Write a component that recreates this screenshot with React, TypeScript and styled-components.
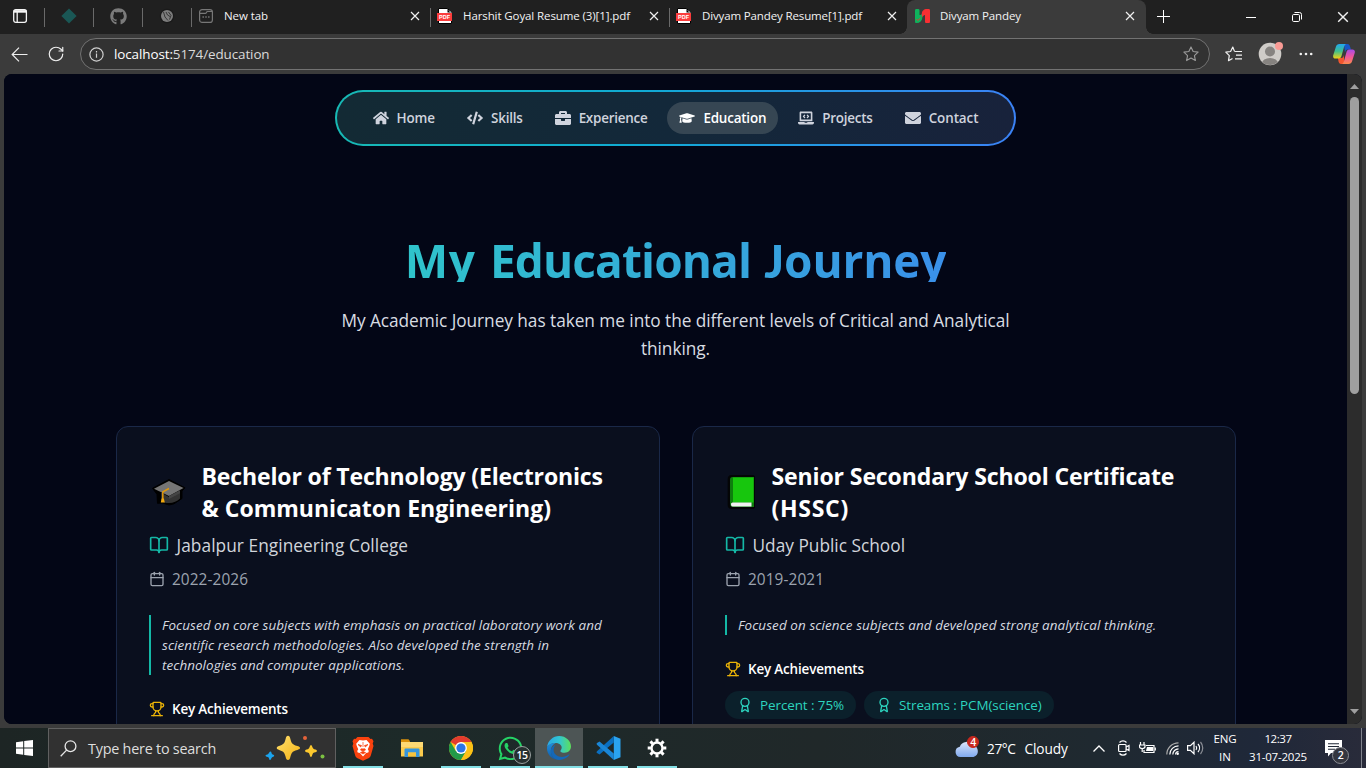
import React from "react";
import styled, { createGlobalStyle, css } from "styled-components";
import { Award, BookOpen, Calendar, Trophy, RotateCw } from "lucide-react";
import {
  FaHome,
  FaCode,
  FaBriefcase,
  FaGraduationCap,
  FaLaptopCode,
  FaEnvelope,
  FaGithub,
  FaWhatsapp,
} from "react-icons/fa";

const Global = createGlobalStyle`
  * { box-sizing: border-box; }
  body {
    margin: 0;
    overflow: hidden;
    font-family: "Open Sans", "Noto Sans", sans-serif;
    background: #3b3b3b;
  }
  svg { display: block; flex: none; }
`;

const Text = styled.span<{ $ls?: number }>`
  white-space: nowrap;
  letter-spacing: ${(p) => p.$ls ?? 0}px;
`;

/* ---------- Window ---------- */

const Window = styled.div`
  width: 1366px;
  height: 768px;
  display: flex;
  flex-direction: column;
  background: #3b3b3b;
  overflow: hidden;
`;

/* ---------- Tab strip ---------- */

const TabStrip = styled.div`
  height: 34px;
  flex: none;
  display: flex;
  align-items: stretch;
  background: #202020;
  color: #f2f2f2;
`;

const Pinned = styled.div<{ $w?: number }>`
  width: ${(p) => p.$w ?? 48}px;
  height: 32px;
  display: flex;
  align-items: center;
  justify-content: center;
`;

const Separator = styled.div`
  width: 1px;
  height: 19px;
  margin-top: 8px;
  background: #6a6a6a;
`;

const Tab = styled.div<{ $w: number; $active?: boolean }>`
  width: ${(p) => p.$w}px;
  height: 34px;
  padding: 0 10px 2px 6px;
  display: flex;
  align-items: center;
  font-size: 11.52px;
  ${(p) =>
    p.$active &&
    css`
      position: relative;
      padding: 0 11px 2px 7px;
      background: #3b3b3b;
      border-radius: 8px 8px 0 0;
      &::before,
      &::after {
        content: "";
        position: absolute;
        bottom: 0;
        width: 7px;
        height: 7px;
      }
      &::before {
        left: -7px;
        background: radial-gradient(circle at 0 0, #202020 6.5px, #3b3b3b 7px);
      }
      &::after {
        right: -7px;
        background: radial-gradient(circle at 100% 0, #202020 6.5px, #3b3b3b 7px);
      }
    `}
`;

const TabIcon = styled.div`
  width: 16px;
  margin-right: 10px;
  display: flex;
  justify-content: center;
`;

const TabTitle = styled(Text)`
  flex: 1;
  padding-bottom: 2px;
`;

const NewTab = styled.div`
  padding: 0 0 2px 11px;
  flex: 1;
  display: flex;
  align-items: center;
`;

const WindowButton = styled.div`
  width: 46px;
  display: flex;
  align-items: center;
  justify-content: center;
`;

const Cross = ({ size = 10 }: { size?: number }) => (
  <svg width={size} height={size} viewBox="0 0 10 10" stroke="#f0f0f0" strokeWidth="1.2">
    <path d="M1 1 9 9M9 1 1 9" />
  </svg>
);

const PdfGlyph = styled.div`
  width: 16px;
  height: 16px;
  position: relative;
`;

const PdfLabel = styled.span`
  position: absolute;
  left: 0;
  top: 5px;
  width: 15px;
  height: 8px;
  background: #fb3c3c;
  color: #fff;
  font: 700 5.5px/8px "Liberation Sans", sans-serif;
  text-align: center;
`;

const PdfIcon = () => (
  <PdfGlyph>
    <svg width="16" height="16" viewBox="0 0 16 16">
      <path d="M1.5.5h9l4 4v11h-13z" fill="#fff" stroke="#000" />
      <path d="M10.5.5v4h4z" fill="#000" />
      <path d="M12 2.5l2 2" stroke="#fff" />
    </svg>
    <PdfLabel>PDF</PdfLabel>
  </PdfGlyph>
);

/* ---------- Toolbar ---------- */

const Toolbar = styled.div`
  height: 40px;
  flex: none;
  display: flex;
  align-items: center;
  padding-left: 10px;
`;

const ToolIcon = styled.div<{ $w: number; $ml?: number }>`
  width: ${(p) => p.$w}px;
  margin-left: ${(p) => p.$ml ?? 0}px;
  display: flex;
  justify-content: center;
`;

const AddressBar = styled.div`
  width: 1130px;
  height: 32px;
  margin-left: 15px;
  padding: 0 10px 0 8px;
  display: flex;
  align-items: center;
  background: #323232;
  border: 1px solid #727272;
  border-radius: 16px;
`;

const Url = styled.div`
  flex: 1;
  margin-left: 10px;
  font-size: 13.44px;
  color: #fff;
`;

const UrlPath = styled(Text)`
  color: #dadada;
`;

const star =
  "M8 .9l2.15 4.6 4.95.65-3.65 3.45.95 4.95L8 12.1l-4.4 2.45.95-4.95L.9 6.15l4.95-.65z";

/* ---------- Page ---------- */

const Viewport = styled.div`
  height: 650px;
  flex: none;
  margin: 0 4px;
  display: flex;
  border-radius: 8px;
  overflow: hidden;
  background: #020617;
`;

const Page = styled.main`
  width: 1343px;
  height: 650px;
  padding-top: 16px;
  overflow: hidden;
  display: flex;
  flex-direction: column;
  align-items: center;
  background: #030616;
`;

const NavBar = styled.nav`
  height: 56px;
  flex: none;
  padding: 0 24px;
  display: flex;
  align-items: center;
  gap: 8px;
  border: 2px solid transparent;
  border-radius: 28px;
  background:
    linear-gradient(90deg, #132a34, #13283a 50%, #18223b) padding-box,
    linear-gradient(90deg, #17b9b4, #10aad4 45%, #3b82f6) border-box;
`;

const NavItem = styled.a<{ $active?: boolean }>`
  height: 32px;
  padding: 0 12px;
  display: flex;
  align-items: center;
  gap: 8px;
  border-radius: 16px;
  font-size: 13.44px;
  font-weight: 650;
  color: ${(p) => (p.$active ? "#ffffff" : "#cfd3dd")};
  background: ${(p) => (p.$active ? "#364653" : "transparent")};
`;

const Title = styled.h1`
  margin: 88px 0 24px;
  height: 48px;
  flex: none;
  font-size: 46px;
  line-height: 52px;
  font-weight: 700;
  white-space: nowrap;
  color: transparent;
  background: linear-gradient(90deg, #2fc4cb, #35a6db 60%, #3a90ea);
  background-clip: text;
  -webkit-background-clip: text;
`;

const TitleWord = styled(Text)`
  margin-left: 2px;
`;

/* Capital that rests on the baseline, so the clipped line box does not cut it. */
const Initial = styled.span`
  font-family: Lato, sans-serif;
  font-weight: 900;
  font-size: 46px;
  margin-left: 2px;
`;

const Lead = styled.p`
  margin: 1px 0 63px;
  flex: none;
  width: 680px;
  text-align: center;
  font-size: 17.28px;
  line-height: 28px;
  letter-spacing: -0.05px;
  color: #d8dce2;
`;

const Cards = styled.section`
  display: grid;
  grid-template-columns: 544px 544px;
  gap: 32px;
  flex: none;
  margin-left: 1px;
`;

const Card = styled.article`
  height: 420px;
  padding: 32px;
  border: 1px solid #1a2848;
  border-radius: 12px;
  background: #0a0f1e;
`;

const CardHead = styled.div`
  height: 64px;
  display: flex;
  align-items: center;
`;

const Emblem = styled.div<{ $w: number }>`
  width: ${(p) => p.$w}px;
  margin: 2px 16.5px 0 0;
  flex: none;
`;

const CardTitle = styled.h2`
  margin: 2px 0 0;
  font-size: 23.04px;
  line-height: 32px;
  font-weight: 700;
  color: #fff;
  display: flex;
  flex-direction: column;
`;

const School = styled.div`
  margin-top: 8px;
  height: 28px;
  display: flex;
  align-items: center;
  gap: 7.5px;
  font-size: 17.28px;
  color: #d1d5db;
  svg { color: #14b8a6; }
`;

const Period = styled.div`
  margin-top: 8px;
  height: 24px;
  display: flex;
  align-items: center;
  gap: 7px;
  font-size: 15.36px;
  color: #9ca3af;
`;

const Summary = styled.p`
  margin: 24px 0;
  padding-left: 11px;
  border-left: 2px solid #14b8a6;
  display: flex;
  flex-direction: column;
  font-size: 13.44px;
  line-height: 20px;
  font-style: italic;
  color: #d6dae0;
`;

const Achievements = styled.h3`
  margin: 0 0 12px;
  height: 20px;
  display: flex;
  align-items: center;
  gap: 7px;
  font-size: 13.44px;
  font-weight: 650;
  color: #fff;
  svg { color: #eab308; }
`;

const Chips = styled.div`
  display: flex;
  gap: 8px;
`;

const Chip = styled.span<{ $w: number }>`
  width: ${(p) => p.$w}px;
  height: 28px;
  padding: 0 12px;
  display: flex;
  align-items: center;
  gap: 7px;
  border-radius: 14px;
  background: #0b202b;
  font-size: 13.44px;
  color: #2dd4bf;
`;

const ScrollTrack = styled.div`
  width: 15px;
  height: 650px;
  padding: 10px 3px;
  display: flex;
  flex-direction: column;
  background: #2c2c2c;
`;

const ScrollThumb = styled.div`
  height: 297px;
  margin-top: 8px;
  margin-bottom: auto;
  border-radius: 5px;
  background: #9f9f9f;
`;

const CapEmoji = () => (
  <svg width="37" height="34" viewBox="0 0 37 34">
    <path
      d="M20 4.5 36 12.8 33 16v7.5L25 28.8 20 30l-6.5-2-5 .3-.5-9-4.5-6z"
      fill="#000"
      stroke="#000"
      strokeLinejoin="round"
    />
    <path d="M12 17.5 20 22l11-5v6.4c-3 2.8-6.5 4.6-11 4.6-3.5 0-6-1-8-2.6z" fill="#333" />
    <path d="M20 6 34.5 13 20 21 5 13.8z" fill="#757575" />
    <path d="m20 21 11-5.7v3L20 24z" fill="#454545" />
    <path d="m20 13.5-6.2 3.4V26" fill="none" stroke="#e39a0b" strokeWidth="1.5" />
    <path d="M12.6 23.5h2.2l1 4h-4z" fill="#f2a90f" />
  </svg>
);

const BookEmoji = () => (
  <svg width="30" height="36" viewBox="0 0 30 36">
    <rect x="2.7" y="1" width="28" height="34" rx="4" fill="#040506" />
    <path d="M7.5 3H29v30H8.5A3.5 3.5 0 0 1 5 29.5v-24A2.5 2.5 0 0 1 7.5 3z" fill="#0e7d0e" />
    <path d="M8 3.5h20.5v25H8z" fill="#17c60d" />
    <path d="M7.5 28.5h19v4h-18a2 2 0 0 1-1-4z" fill="#f1f1f1" />
  </svg>
);

type Edu = {
  emblem: React.ReactNode;
  emblemWidth: number;
  title: [string, number][];
  school: [string, number];
  period: string;
  summary: [string, number][];
  chips: [string, number, number][];
};

const education: Edu[] = [
  {
    emblem: <CapEmoji />,
    emblemWidth: 36,
    title: [
      ["Bechelor of Technology (Electronics", -0.15],
      ["& Communicaton Engineering)", -0.01],
    ],
    school: ["Jabalpur Engineering College", 0.06],
    period: "2022-2026",
    summary: [
      ["Focused on core subjects with emphasis on practical laboratory work and", 0.066],
      ["scientific research methodologies. Also developed the strength in", 0.086],
      ["technologies and computer applications.", 0.055],
    ],
    chips: [],
  },
  {
    emblem: <BookEmoji />,
    emblemWidth: 30,
    title: [
      ["Senior Secondary School Certificate", -0.12],
      ["(HSSC)", 0.7],
    ],
    school: ["Uday Public School", 0.01],
    period: "2019-2021",
    summary: [["Focused on science subjects and developed strong analytical thinking.", 0.095]],
    chips: [
      ["Percent : 75%", -0.08, 131],
      ["Streams : PCM(science)", -0.09, 190],
    ],
  },
];

/* ---------- Taskbar ---------- */

const Taskbar = styled.footer`
  height: 40px;
  margin-top: 4px;
  flex: none;
  display: flex;
  background: linear-gradient(90deg, #1d2524, #1d2a29 30%, #202829 60%, #1f2930 80%, #1f2839 92%, #292b3a);
  color: #fff;
`;

const StartButton = styled.div`
  width: 48px;
  display: flex;
  align-items: center;
  justify-content: center;
`;

const SearchBox = styled.div`
  width: 288px;
  padding: 0 9px 0 11px;
  display: flex;
  align-items: center;
  background: #313131;
  border: 1px solid #606060;
  font-size: 14.4px;
  color: #dedede;
`;

const SearchText = styled(Text)`
  margin-left: 11px;
  flex: 1;
`;

const Apps = styled.div`
  margin-left: 3px;
  display: flex;
  gap: 1px;
  flex: 1;
`;

const AppSlot = styled.div<{ $state?: "open" | "active" }>`
  width: 48px;
  height: 40px;
  position: relative;
  display: flex;
  align-items: center;
  justify-content: center;
  background: ${(p) => (p.$state === "active" ? "#4d5555" : "transparent")};
  &::after {
    content: "";
    position: absolute;
    bottom: 0;
    left: ${(p) => (p.$state === "active" ? 0 : 4)}px;
    right: ${(p) => (p.$state === "active" ? 0 : 4)}px;
    height: 2px;
    background: ${(p) => (p.$state ? "#83dfe5" : "transparent")};
  }
`;

const CountBadge = styled.span<{ $x: number; $y: number; $d: number; $bg: string; $ring: string }>`
  position: absolute;
  left: ${(p) => p.$x}px;
  top: ${(p) => p.$y}px;
  width: ${(p) => p.$d}px;
  height: ${(p) => p.$d}px;
  line-height: ${(p) => p.$d - 2}px;
  border: 1px solid ${(p) => p.$ring};
  border-radius: 50%;
  background: ${(p) => p.$bg};
  color: #fff;
  font-size: 10.5px;
  font-weight: 600;
  letter-spacing: -0.4px;
  text-align: center;
`;

const Tray = styled.div`
  display: flex;
  align-items: center;
`;

const TrayItem = styled.div<{ $w: number }>`
  width: ${(p) => p.$w}px;
  height: 40px;
  flex: none;
  position: relative;
  display: flex;
  align-items: center;
`;

const Weather = styled.div`
  width: 106px;
  display: flex;
  gap: 9px;
  font-size: 13.7px;
`;

const Stack = styled.div<{ $w: number }>`
  width: ${(p) => p.$w}px;
  margin-top: -1px;
  display: flex;
  flex-direction: column;
  align-items: center;
  font-size: 11.52px;
  line-height: 17.5px;
`;

const Desktop = styled.div`
  width: 5px;
  height: 40px;
  border-left: 1px solid #80838c;
`;

const Brave = () => (
  <svg width="22" height="25" viewBox="0 0 22 25">
    <path d="M5.5 1h11l2 2 1.5-.3 1.5 2.600-.8 2.200.8 2.500-2.700 9.500c-.5 1.500-1.300 2-2.300 2.700L11 24.800l-5.500-2.600c-1-.7-1.800-1.200-2.300-2.700L.5 10l.8-2.500-.8-2.200L2 2.700 3.500 3z" fill="#f9420e" />
    <path d="M11 4.500 14.500 4l3.300 3.800-.5 2-1.500 3.500 1 1.700-.5 1.500-2.300.5L11 20.500 8 17l-2.300-.5-.5-1.500 1-1.700-1.500-3.500-.5-2L7.500 4z" fill="#fff" />
    <path d="m6 8.500 3.500 1-.8 1.500zM16 8.500l-3.500 1 .8 1.500zM9.300 12.500 8.500 14l2.500 1 2.500-1-.8-1.500M8.500 16.500l2.500-1 2.500 1L11 18zM11 6v5" fill="#f9420e" stroke="#f9420e" strokeWidth=".7" />
  </svg>
);

const Explorer = () => (
  <svg width="22" height="20" viewBox="0 0 22 20">
    <path d="M0 1.200h7.500l1.500 2V7H0z" fill="#d9910c" />
    <path d="M0 4h22v14.500H0z" fill="#fbcb4d" />
    <path d="M0 4h22v5H0z" fill="#fdd974" />
    <path d="M3.500 11.500a1 1 0 0 1 1-1h13a1 1 0 0 1 1 1v7.500H15v-4.500H7V19H3.500z" fill="#3595dc" />
    <path d="M7 14.500h8V18.500H7z" fill="#f5c33e" />
  </svg>
);

const Chrome = () => (
  <svg width="24" height="24" viewBox="0 0 24 24">
    <circle cx="12" cy="12" r="12" fill="#fbc116" />
    <path d="M12 12 1.600 6A12 12 0 0 1 22.400 6H12z" fill="#e33b2e" />
    <path d="M1.600 6A12 12 0 0 0 12 24l5.200-9L12 12 6.800 15z" fill="#229a48" />
    <path d="M12 6h10.400A12 12 0 0 1 12 24l5.200-9z" fill="#fbc116" />
    <circle cx="12" cy="12" r="5.900" fill="#fff" />
    <circle cx="12" cy="12" r="4.600" fill="#2d75e6" />
  </svg>
);

const EdgeLogo = () => (
  <svg width="24" height="24" viewBox="0 0 24 24">
    <defs>
      <linearGradient id="edgeTop" x1="0" y1=".5" x2="1" y2=".5">
        <stop offset="0" stopColor="#2aa6e6" />
        <stop offset=".5" stopColor="#30c5d4" />
        <stop offset="1" stopColor="#5ddf5b" />
      </linearGradient>
      <linearGradient id="edgeSide" x1="0" y1="0" x2="0" y2="1">
        <stop offset="0" stopColor="#1f8fdd" />
        <stop offset="1" stopColor="#0f5aa8" />
      </linearGradient>
    </defs>
    <path d="M.1 11C.8 4.700 6 0 12.200 0 19 0 24 5 24 10.600c0 3.600-2.800 6.200-6.300 6.200-3 0-4.300-1-4.300-1.900 0-.6 1.300-1.300 1.300-3.400C14.700 9 11.800 7 8.500 7 4.700 7 1.500 8.800.1 11z" fill="url(#edgeTop)" />
    <path d="M.1 11C1.500 8.500 4.700 7 8.500 7c-3 1.500-4.700 4.500-4.700 8 0 4 2.600 7.600 6.200 8.800C4.300 23 0 18.200 0 12.500z" fill="url(#edgeSide)" />
    <path d="M8.700 8.700C7.300 10 6.600 12 6.600 14c0 4.300 4 6.900 8.300 6.900 2.500 0 4.800-.8 7-2.300.5-.3.8 0 .5.500C20.200 22 16.500 24 12.200 24 7.500 24 3.800 20 3.800 15c0-2.600 1.800-5.300 4.900-6.300z" fill="#1468b8" />
  </svg>
);

const VsCode = () => (
  <svg width="25" height="24" viewBox="0 0 25 24">
    <path d="M17.800 0 24.500 2.800V21.200L17.800 24z" fill="#2aa3f0" />
    <path d="M17.800 0v6.500L3.500 18.500 1 17c-.6-.5-.6-1.200 0-1.800z" fill="#0a6fc0" />
    <path d="M17.800 24v-6.500L3.500 5.500 1 7c-.6.500-.6 1.200 0 1.800z" fill="#1a86d6" />
  </svg>
);

const Gear = () => (
  <svg width="20" height="20" viewBox="0 0 20 20" fill="none" stroke="#fff">
    <circle cx="10" cy="10" r="5.500" strokeWidth="2.400" />
    {[0, 45, 90, 135, 180, 225, 270, 315].map((a) => (
      <path key={a} d="M10 .7v3.200" strokeWidth="3" transform={`rotate(${a} 10 10)`} />
    ))}
  </svg>
);

const Sparkles = () => (
  <svg width="61" height="26" viewBox="0 0 61 26">
    <defs>
      <linearGradient id="gold" x1="0" y1="0" x2="1" y2="1">
        <stop offset="0" stopColor="#ffe070" />
        <stop offset="1" stopColor="#f5b312" />
      </linearGradient>
    </defs>
    <path d="M23 .8c1.300 0 1.900 1 2.400 3.200.8 3.400 1.700 5 4 6 2.800 1.200 5.600 1.300 5.600 2.900s-2.800 1.700-5.600 3c-2.300 1-3.200 2.500-4 5.800-.5 2.200-1.100 3.300-2.400 3.300s-1.900-1.100-2.400-3.300c-.8-3.300-1.700-4.800-4-5.800-2.600-1.300-4.900-1.400-4.900-3s2.300-1.700 4.900-2.900c2.300-1 3.200-2.600 4-6C21.100 1.800 21.700.8 23 .8z" fill="url(#gold)" />
    <path d="M46 10c1.200 0 1.200 2.500 2.200 3.600s3.800 1.100 3.800 2.300-2.800 1.200-3.800 2.200-1 3.900-2.200 3.900-1.200-2.900-2.200-3.900-3.800-1-3.800-2.200 2.800-1.200 3.800-2.300S44.800 10 46 10z" fill="#fcc82e" />
    <path d="M5.500 16.500c1.100 0 .8 1.800 1.500 2.600s2.200.6 2.200 1.600-1.500 1-2.300 1.700-.9 2.500-1.900 2.500-.7-1.800-1.400-2.500S.5 21.800.5 20.800s1.900-.9 2.700-1.700 1.200-2.600 2.300-2.600z" fill="#1ba4ee" />
    <circle cx="40" cy="3" r="2" fill="#e5633a" />
    <circle cx="57.500" cy="21.500" r="2" fill="#7cc142" />
  </svg>
);

export default function App() {
  return (
    <Window>
      <Global />
      <TabStrip>
        <Pinned $w={44}>
          <svg width="24" height="14" viewBox="0 0 24 14" fill="none" stroke="#f4f4f4" strokeWidth="1.300">
            <rect x="3.700" y=".7" width="12.700" height="12.600" rx="2" />
            <path d="M3.700 2.400h12.700" strokeWidth="2.600" />
            <path d="M7.200 3v10" />
          </svg>
        </Pinned>
        <Separator />
        <Pinned>
          <svg width="16" height="16" viewBox="0 0 16 16">
            <path d="M8 .4 15.600 8 8 15.600.4 8z" fill="#1a5755" />
          </svg>
        </Pinned>
        <Separator />
        <Pinned>
          <FaGithub size={17} color="#7b7b7b" />
        </Pinned>
        <Separator />
        <Pinned>
          <svg width="16" height="16" viewBox="0 0 16 16">
            <circle cx="8" cy="8" r="7.300" fill="#1a1a1a" />
            <circle cx="8" cy="8" r="6" fill="#7d7d7d" />
            <path d="M4.500 4 6 9l3 3.500M7 4l1.500 3L11 8.500M9.500 4l2.500 3.500-1.500 4" stroke="#363636" fill="none" />
          </svg>
        </Pinned>
        <Separator />
        <Tab $w={238}>
          <TabIcon>
            <svg width="14" height="14" viewBox="0 0 14 14" fill="none" stroke="#777" strokeWidth="1.200">
              <rect x=".6" y=".6" width="12.800" height="12.800" rx="2.500" />
              <path d="M1 4.300h5.500c1.500 0 .5-1.800 2-1.800h4.800" />
              <path d="M3.500 8h1.400M6.300 8h1.400M9.100 8h1.400" strokeWidth="1.400" />
            </svg>
          </TabIcon>
          <TabTitle $ls={-0.087}>New tab</TabTitle>
          <Cross />
        </Tab>
        <Separator />
        <Tab $w={238}>
          <TabIcon>
            <PdfIcon />
          </TabIcon>
          <TabTitle $ls={-0.105}>Harshit Goyal Resume (3)[1].pdf</TabTitle>
          <Cross />
        </Tab>
        <Separator />
        <Tab $w={237}>
          <TabIcon>
            <PdfIcon />
          </TabIcon>
          <TabTitle $ls={-0.143}>Divyam Pandey Resume[1].pdf</TabTitle>
          <Cross />
        </Tab>
        <Tab $w={239} $active>
          <TabIcon>
            <svg width="15" height="14" viewBox="0 0 15 14">
              <path d="M0 1.500C0 .5.500 0 1.500 0H3c1 0 1.500.5 1.500 1.500V6c1.500 0 2.500-.5 3-2v4c-.5 4-2.500 6-6 6C.5 14 0 13.500 0 12.500z" fill="#0fb25c" />
              <path d="M6.800 8.500V5c0-3 2-5 5.200-5h1.500c1 0 1.500.5 1.500 1.500v11c0 1-.5 1.500-1.500 1.500h-2c-1 0-1.500-.5-1.500-1.500V6c-1.200 0-2.200 1-3.200 2.500z" fill="#f92f32" />
              <path d="m1.500 10 1.300 1.500L5.500 9" fill="none" stroke="#d64038" />
            </svg>
          </TabIcon>
          <TabTitle $ls={-0.117}>Divyam Pandey</TabTitle>
          <Cross />
        </Tab>
        <NewTab>
          <svg width="13" height="13" viewBox="0 0 13 13" fill="#fff">
            <path d="M6 0h1v6h6v1H7v6H6V7H0V6h6z" />
          </svg>
        </NewTab>
        <WindowButton>
          <svg width="10" height="10" viewBox="0 0 10 10">
            <path d="M0 5h10v1H0z" fill="#fff" />
          </svg>
        </WindowButton>
        <WindowButton>
          <svg width="10" height="10" viewBox="0 0 10 10" fill="none" stroke="#fff">
            <rect x=".5" y="2.500" width="7" height="7" rx="1.200" />
            <path d="M2.500.5H7.500a2 2 0 0 1 2 2V7.500" />
          </svg>
        </WindowButton>
        <WindowButton>
          <Cross size={12} />
        </WindowButton>
      </TabStrip>

      <Toolbar>
        <ToolIcon $w={18}>
          <svg width="17" height="15" viewBox="0 0 17 15" fill="none" stroke="#eee" strokeWidth="1.200">
            <path d="M16.500 7.500H1.200M8 .7 1.200 7.500 8 14.300" />
          </svg>
        </ToolIcon>
        <ToolIcon $w={18} $ml={19}>
          <RotateCw size={18} strokeWidth={1.600} color="#eee" />
        </ToolIcon>
        <AddressBar>
          <svg width="15" height="15" viewBox="0 0 15 15" fill="none" stroke="#cfcfcf" strokeWidth="1.200">
            <circle cx="7.500" cy="7.500" r="6.600" />
            <path d="M7.500 6.500v4.300M7.500 4v1.400" />
          </svg>
          <Url>
            <Text $ls={-0.1}>localhost:</Text>
            <UrlPath $ls={-0.1}>5174/education</UrlPath>
          </Url>
          <svg width="16" height="16" viewBox="0 0 16 16" fill="none" stroke="#9b9b9b" strokeWidth="1.100" strokeLinejoin="round">
            <path d={star} />
          </svg>
        </AddressBar>
        <ToolIcon $w={18} $ml={15}>
          <svg width="18" height="16" viewBox="0 0 18 16" fill="none" stroke="#f2f2f2" strokeWidth="1.200" strokeLinejoin="round">
            <path d="M9.500 5.400 7.800 1 5.600 5.500.8 6.200l3.500 3.500-.8 5L7.500 12.400" />
            <path d="M9.500 5.500H17M11 9.200h6M10 12.800h7" />
          </svg>
        </ToolIcon>
        <ToolIcon $w={26} $ml={15}>
          <svg width="26" height="26" viewBox="0 0 26 26">
            <defs>
              <clipPath id="face">
                <circle cx="12" cy="13" r="11" />
              </clipPath>
            </defs>
            <circle cx="12" cy="13" r="11.300" fill="#cfccc8" />
            <g clipPath="url(#face)" fill="#868380">
              <circle cx="12" cy="10.500" r="5" />
              <ellipse cx="12" cy="22.500" rx="8" ry="5.500" />
            </g>
            <circle cx="21" cy="5" r="4" fill="#f99b95" />
          </svg>
        </ToolIcon>
        <ToolIcon $w={14} $ml={15}>
          <svg width="14" height="4" viewBox="0 0 14 4" fill="#f2f2f2">
            <circle cx="1.800" cy="2" r="1.300" />
            <circle cx="7" cy="2" r="1.300" />
            <circle cx="12.200" cy="2" r="1.300" />
          </svg>
        </ToolIcon>
        <ToolIcon $w={22} $ml={20}>
          <svg width="22" height="20" viewBox="0 0 22 20">
            <defs>
              <linearGradient id="cpA" x1="0" y1="0" x2="0" y2="1">
                <stop offset="0" stopColor="#22a8f0" />
                <stop offset=".5" stopColor="#3fc08d" />
                <stop offset="1" stopColor="#f2d313" />
              </linearGradient>
              <linearGradient id="cpB" x1="0" y1="0" x2="0" y2="1">
                <stop offset="0" stopColor="#a64be8" />
                <stop offset=".5" stopColor="#f0559b" />
                <stop offset="1" stopColor="#fb8a4b" />
              </linearGradient>
            </defs>
            <path d="M11 0h3.500c1.500 0 2 1 2.500 2.500l1 3h-3c-2 0-2.500 1-3 3z" fill="#1757c9" />
            <path d="M11 20H8c-1.500 0-2-1-2.500-2.500L5 14h3c2 0 2.500-1 3-3z" fill="#f2562f" />
            <path d="M6.500 0H13c-1 .5-1.500 1.500-2 3L8.500 12c-.5 1.500-1.200 2.500-2.700 2.500H2.500C.5 14.500-.3 12.800.3 11L3 2.500C3.500 1 4.500 0 6.500 0z" fill="url(#cpA)" />
            <path d="M15.500 20H9c1-.5 1.500-1.500 2-3l2.500-9c.5-1.500 1.200-2.500 2.700-2.500h3.300c2 0 2.800 1.700 2.200 3.500L19 17.500c-.5 1.500-1.500 2.500-3.500 2.500z" fill="url(#cpB)" />
          </svg>
        </ToolIcon>
      </Toolbar>

      <Viewport>
        <Page>
          <NavBar>
            <NavItem>
              <FaHome size={16} />
              <Text $ls={-0.12}>Home</Text>
            </NavItem>
            <NavItem>
              <FaCode size={16} />
              <Text $ls={-0.2}>Skills</Text>
            </NavItem>
            <NavItem>
              <FaBriefcase size={16} />
              <Text $ls={-0.25}>Experience</Text>
            </NavItem>
            <NavItem $active>
              <FaGraduationCap size={16} />
              <Text $ls={-0.2}>Education</Text>
            </NavItem>
            <NavItem>
              <FaLaptopCode size={16} />
              <Text $ls={-0.24}>Projects</Text>
            </NavItem>
            <NavItem>
              <FaEnvelope size={16} />
              <Text $ls={-0.08}>Contact</Text>
            </NavItem>
          </NavBar>
          <Title>
            <Text $ls={0.6}>My </Text>
            <TitleWord $ls={-0.9}>Educational </TitleWord>
            <Initial>J</Initial>
            <Text $ls={-0.15}>ourney</Text>
          </Title>
          <Lead>
            My Academic Journey has taken me into the different levels of Critical and Analytical thinking.
          </Lead>
          <Cards>
            {education.map((e) => (
              <Card key={e.period}>
                <CardHead>
                  <Emblem $w={e.emblemWidth}>{e.emblem}</Emblem>
                  <CardTitle>
                    {e.title.map(([t, ls]) => (
                      <Text key={t} $ls={ls}>{t}</Text>
                    ))}
                  </CardTitle>
                </CardHead>
                <School>
                  <BookOpen size={20} />
                  <Text $ls={e.school[1]}>{e.school[0]}</Text>
                </School>
                <Period>
                  <Calendar size={16} />
                  <Text $ls={0.089}>{e.period}</Text>
                </Period>
                <Summary>
                  {e.summary.map(([t, ls]) => (
                    <Text key={t} $ls={ls}>{t}</Text>
                  ))}
                </Summary>
                <Achievements>
                  <Trophy size={16} />
                  <Text $ls={-0.16}>Key Achievements</Text>
                </Achievements>
                <Chips>
                  {e.chips.map(([t, ls, w]) => (
                    <Chip key={t} $w={w}>
                      <Award size={16} />
                      <Text $ls={ls}>{t}</Text>
                    </Chip>
                  ))}
                </Chips>
              </Card>
            ))}
          </Cards>
        </Page>
        <ScrollTrack>
          <svg width="9" height="5" viewBox="0 0 9 5">
            <path d="M0 5 4.500 0 9 5z" fill="#9f9f9f" />
          </svg>
          <ScrollThumb />
          <svg width="9" height="5" viewBox="0 0 9 5">
            <path d="M0 0 4.500 5 9 0z" fill="#9f9f9f" />
          </svg>
        </ScrollTrack>
      </Viewport>

      <Taskbar>
        <StartButton>
          <svg width="17" height="16" viewBox="0 0 17 16" fill="#fff">
            <path d="M0 2.300 7.200 1.300V7.600H0zM8.200 1.100 17 0v7.600H8.200zM0 8.500h7.200v6.300L0 13.800zM8.200 8.500H17V16l-8.800-1.100z" />
          </svg>
        </StartButton>
        <SearchBox>
          <svg width="17" height="17" viewBox="0 0 17 17" fill="none" stroke="#e6e6e6" strokeWidth="1.300">
            <circle cx="10.500" cy="6.200" r="5.400" />
            <path d="M6.600 10.100.7 16.200" />
          </svg>
          <SearchText $ls={-0.234}>Type here to search</SearchText>
          <Sparkles />
        </SearchBox>
        <Apps>
          <AppSlot $state="open">
            <Brave />
          </AppSlot>
          <AppSlot>
            <Explorer />
          </AppSlot>
          <AppSlot $state="open">
            <Chrome />
          </AppSlot>
          <AppSlot $state="open">
            <FaWhatsapp size={27} color="#25d366" />
            <CountBadge $x={27} $y={18} $d={18} $bg="#263030" $ring="#9aa0a0">15</CountBadge>
          </AppSlot>
          <AppSlot $state="active">
            <EdgeLogo />
          </AppSlot>
          <AppSlot $state="open">
            <VsCode />
          </AppSlot>
          <AppSlot $state="open">
            <Gear />
          </AppSlot>
        </Apps>
        <Tray>
          <TrayItem $w={32}>
            <svg width="25" height="17" viewBox="0 0 25 17">
              <defs>
                <linearGradient id="cloud" x1="0" y1="0" x2="0" y2="1">
                  <stop offset="0" stopColor="#dbe6fb" />
                  <stop offset="1" stopColor="#7fa9ee" />
                </linearGradient>
              </defs>
              <path d="M5.500 17a5.200 5.200 0 0 1-.7-10.300A7.300 7.300 0 0 1 18 5.500a5.900 5.900 0 0 1 .5 11.500z" fill="url(#cloud)" />
            </svg>
            <CountBadge $x={12} $y={8} $d={12} $bg="#c8281e" $ring="#c8281e">4</CountBadge>
          </TrayItem>
          <Weather>
            <Text $ls={-0.4}>27°C</Text>
            <Text $ls={-0.15}>Cloudy</Text>
          </Weather>
          <TrayItem $w={25}>
            <svg width="12" height="7" viewBox="0 0 12 7" fill="none" stroke="#fff" strokeWidth="1.300">
              <path d="m.5 6.500 5.500-5.500 5.500 5.500" />
            </svg>
          </TrayItem>
          <TrayItem $w={21}>
            <svg width="12" height="16" viewBox="0 0 12 16" fill="none" stroke="#fff" strokeWidth="1.200">
              <rect x=".6" y="4.500" width="7.500" height="7" rx="1" />
              <path d="M8 7l3-1.500v5L8 9M1.500 2.500c2-2.200 5-2.200 7 0M1.500 13.500c2 2.200 5 2.200 7 0" />
            </svg>
          </TrayItem>
          <TrayItem $w={27}>
            <svg width="17" height="13" viewBox="0 0 17 13" fill="none" stroke="#fff" strokeWidth="1.200">
              <path d="M7 3.500h8v7H5V8" />
              <path d="M8 5h6v4H7z" fill="#fff" stroke="none" />
              <path d="M16.300 5.500v3M1.500 0v2.500M5 0v2.500M.5 3h5.500v1.500c0 1.300-1 2-2.700 2S.5 5.800.5 4.500zM3.200 6v4" />
            </svg>
          </TrayItem>
          <TrayItem $w={21}>
            <svg width="13" height="13" viewBox="0 0 13 13" fill="none" stroke="#fff" strokeWidth="1.200">
              <path d="M.8 12.500C.8 6 6 .8 12.500.8" stroke="#aaa" />
              <path d="M3.800 12.500c0-4.800 3.900-8.700 8.700-8.700M6.800 12.500c0-3.100 2.600-5.700 5.700-5.700M9.600 12.500c0-1.600 1.300-2.900 2.900-2.900" />
              <circle cx="11.700" cy="11.700" r="1.200" fill="#fff" stroke="none" />
            </svg>
          </TrayItem>
          <TrayItem $w={26}>
            <svg width="17" height="14" viewBox="0 0 17 14" fill="none" stroke="#fff" strokeWidth="1.200">
              <path d="M.6 4.700h2.800L7 1.200v11.600L3.400 9.300H.6z" />
              <path d="M9 5c.9 1.200.9 2.800 0 4M11 3c2 2.300 2 5.700 0 8" />
              <path d="M13.500 1c3 3.500 3 8.500 0 12" stroke="#8c8f96" />
            </svg>
          </TrayItem>
          <Stack $w={24}>
            <Text $ls={-0.15}>ENG</Text>
            <Text>IN</Text>
          </Stack>
          <Stack $w={82}>
            <Text $ls={-0.47}>12:37</Text>
            <Text $ls={-0.209}>31-07-2025</Text>
          </Stack>
          <TrayItem $w={42}>
            <svg width="24" height="17" viewBox="0 0 24 17">
              <path d="M6 0h17v13H12l-3 3.500V13H6z" fill="#fff" />
              <path d="M9 3.700h11M9 6.500h11M9 9.300h7" stroke="#232a38" strokeWidth="1.100" />
            </svg>
            <CountBadge $x={13} $y={19} $d={17} $bg="#34363f" $ring="#8b8d94">2</CountBadge>
          </TrayItem>
          <Desktop />
        </Tray>
      </Taskbar>
    </Window>
  );
}
